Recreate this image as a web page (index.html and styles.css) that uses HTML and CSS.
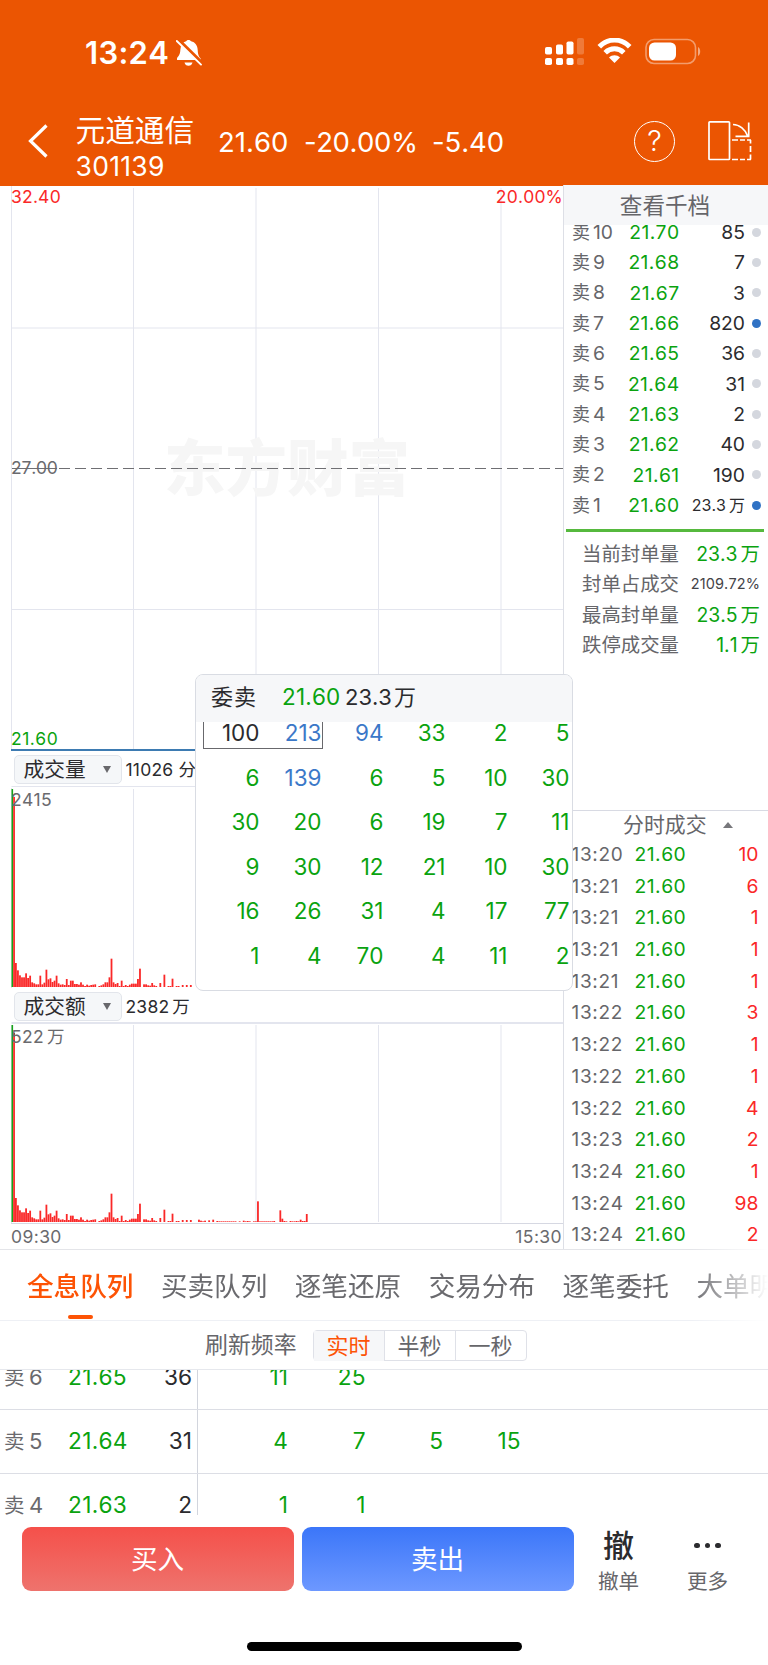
FILE: index.html
```html
<!DOCTYPE html>
<html lang="zh-CN">
<head>
<meta charset="utf-8">
<title>元道通信 301139</title>
<link rel="stylesheet" href="styles.css">
</head>
<body>
<header class="header">
  <div class="status">
    <span class="clock">13:24</span>
    <svg class="bell" width="26" height="28" viewBox="0 0 26 28">
      <path fill="#fff" d="M12.5 1c.9 0 1.900.5 2.600 1.200 4 1 6.400 4 6.600 8.800.2 4.500 1.100 6.200 2.600 8.100.4.600.7 1.300.7 1.900H1c-.3-2.300.7-2.800 1.600-4 1-1.500 1.600-3 1.800-6.500.3-4.400 2.300-7.300 5.700-8.300C10.700 1.500 11.600 1 12.500 1zM8.500 23.500h8c-.4 2-2 3.300-4 3.300s-3.600-1.300-4-3.300z"/>
      <path d="M1.200 0L26 24.200" stroke="#eb5502" stroke-width="4"/>
      <path d="M.8 2L25 25.600" stroke="#fff" stroke-width="1.900" stroke-linecap="round"/>
    </svg>
    <svg class="signal" width="40" height="28" viewBox="0 0 40 28" fill="#fff">
      <rect x="1" y="9" width="7" height="7.500" rx="1.800"/><rect x="12" y="6.500" width="7" height="10" rx="1.800"/><rect x="22.500" y="3.500" width="7" height="13" rx="1.800"/><rect x="33" y="0" width="7" height="16.500" rx="1.800" opacity=".22"/>
      <rect x="1" y="20" width="7" height="7" rx="1.800"/><rect x="12" y="20" width="7" height="7" rx="1.800"/><rect x="22.500" y="20" width="7" height="7" rx="1.800"/><rect x="33" y="20" width="7" height="7" rx="1.800" opacity=".22"/>
    </svg>
    <svg class="wifi" width="35" height="26" viewBox="0 0 35 26" fill="none" stroke="#fff" stroke-width="5">
      <path d="M2.300 8.800C11-0.200 24-0.200 32.700 8.800"/><path d="M8.200 14.700C13.500 9.500 21.500 9.500 26.800 14.700"/><path stroke="none" fill="#fff" d="M12 19.500c3-3 8-3 11 0L17.500 25z"/>
    </svg>
    <svg class="battery" width="56" height="27" viewBox="0 0 56 27">
      <rect x="1" y="1.500" width="49.500" height="24" rx="8" fill="none" stroke="#fff" stroke-opacity=".42" stroke-width="1.600"/>
      <rect x="4" y="4.500" width="27" height="18" rx="5.500" fill="#fff"/><path d="M53 9c2.900 1.200 2.900 7.800 0 9z" fill="#fff" opacity=".5"/>
    </svg>
  </div>
  <div class="title">
    <svg class="back" width="22" height="36" viewBox="0 0 22 36"><path d="M19.500 2.500L3.500 18l16 15.500" fill="none" stroke="#fff" stroke-width="3.200"/></svg>
    <div class="stock"><span class="name">元道通信</span><span class="code">301139</span></div>
    <span class="quote q1">21.60</span><span class="quote q2">-20.00%</span><span class="quote q3">-5.40</span>
    <div class="help">?</div>
    <svg class="rotate" width="46" height="42" viewBox="0 0 46 42" fill="none" stroke="#fff" stroke-width="1.700">
      <rect x="1" y="1.800" width="20.500" height="37.700" rx=".8"/>
      <path d="M25 4.500c6.500 0 12.500 5 14.600 11.500M40.700 2.500v13.700M27.500 16.400h14"/>
      <path d="M24 20h6M32 20h5M39 20h4M42.500 20v3.500M42.500 26v6M42.500 34.500v5M24 39.500h6M32 39.500h5M39 39.500h4"/>
    </svg>
  </div>
</header>

<main class="main">
  <section class="charts">
    <div class="panel price">
      <svg class="plot" width="564" height="566">
        <g class="grid"><path d="M11.500 0V566M133.500 3V564M256 3V564M378.500 3V564M501 3V564M12 143H563M12 424.500H563"/></g>
        <text class="mark" x="287" y="306" text-anchor="middle">东方财富</text>
        <path class="mid" d="M12 283.500H57"/><path class="mid dash" d="M59 283.500H563"/>
        <path class="flat" d="M11 565H564"/>
      </svg>
      <div class="ends red"><span>32.40</span><span>20.00%</span></div>
      <div class="center-price">27.00</div>
      <div class="ends green"><span>21.60</span></div>
    </div>
    <div class="tool"><div class="select">成交量<i></i></div><span>11026 分时</span></div>
    <div class="panel volume">
      <svg class="plot" width="564" height="203">
        <g class="grid"><path d="M11.500 1.500H564M11.500 3V203M133.500 4V202M256 4V202M378.500 4V202M501 4V202"/></g>
        <g class="bars" data-base="202" data-top="4"></g>
      </svg>
      <span class="peak">2415</span>
    </div>
    <div class="tool"><div class="select">成交额<i></i></div><span>2382<u>万</u></span></div>
    <div class="panel amount">
      <svg class="plot" width="564" height="202">
        <g class="grid"><path d="M11.500 1H564" class="thick"/><path d="M11.500 3V202M133.500 3V200M256 3V200M378.500 3V200M501 3V200"/></g>
        <path class="axisline" d="M11 201.500H564"/>
        <g class="bars" data-base="200" data-top="3"></g>
      </svg>
      <span class="peak">522<u>万</u></span>
    </div>
    <div class="ends axis"><span>09:30</span><span>15:30</span></div>
  </section>

  <aside class="book">
    <div class="book-head">查看千档</div>
    <div class="asks">
      <div><b>卖<s>10</s></b><em>21.70</em><span>85</span><i></i></div>
      <div><b>卖<s>9</s></b><em>21.68</em><span>7</span><i></i></div>
      <div><b>卖<s>8</s></b><em>21.67</em><span>3</span><i></i></div>
      <div><b>卖<s>7</s></b><em>21.66</em><span>820</span><i class="on"></i></div>
      <div><b>卖<s>6</s></b><em>21.65</em><span>36</span><i></i></div>
      <div><b>卖<s>5</s></b><em>21.64</em><span>31</span><i></i></div>
      <div><b>卖<s>4</s></b><em>21.63</em><span>2</span><i></i></div>
      <div><b>卖<s>3</s></b><em>21.62</em><span>40</span><i></i></div>
      <div><b>卖<s>2</s></b><em>21.61</em><span>190</span><i></i></div>
      <div><b>卖<s>1</s></b><em>21.60</em><span class="small">23.3<u>万</u></span><i class="on"></i></div>
    </div>
    <div class="divider"></div>
    <div class="info">
      <div>当前封单量<span>23.3<u>万</u></span></div>
      <div>封单占成交<span class="pct">2109.72%</span></div>
      <div>最高封单量<span>23.5<u>万</u></span></div>
      <div>跌停成交量<span>1.1<u>万</u></span></div>
    </div>
    <div class="ticks">
      <div class="ticks-head">分时成交<i></i></div>
      <div class="tick"><b>13:20</b><em>21.60</em><span>10</span></div>
      <div class="tick"><b>13:21</b><em>21.60</em><span>6</span></div>
      <div class="tick"><b>13:21</b><em>21.60</em><span>1</span></div>
      <div class="tick"><b>13:21</b><em>21.60</em><span>1</span></div>
      <div class="tick"><b>13:21</b><em>21.60</em><span>1</span></div>
      <div class="tick"><b>13:22</b><em>21.60</em><span>3</span></div>
      <div class="tick"><b>13:22</b><em>21.60</em><span>1</span></div>
      <div class="tick"><b>13:22</b><em>21.60</em><span>1</span></div>
      <div class="tick"><b>13:22</b><em>21.60</em><span>4</span></div>
      <div class="tick"><b>13:23</b><em>21.60</em><span>2</span></div>
      <div class="tick"><b>13:24</b><em>21.60</em><span>1</span></div>
      <div class="tick"><b>13:24</b><em>21.60</em><span>98</span></div>
      <div class="tick"><b>13:24</b><em>21.60</em><span>2</span></div>
    </div>
  </aside>

  <div class="popup">
    <div class="popup-head"><b>委卖</b><em>21.60</em><span>23.3<u>万</u></span></div>
    <div class="queue">
      <span class="own"></span>
      <span class="dark">100</span><span class="blue">213</span><span class="blue">94</span><span>33</span><span>2</span><span>5</span>
      <span>6</span><span class="blue">139</span><span>6</span><span>5</span><span>10</span><span>30</span>
      <span>30</span><span>20</span><span>6</span><span>19</span><span>7</span><span>11</span>
      <span>9</span><span>30</span><span>12</span><span>21</span><span>10</span><span>30</span>
      <span>16</span><span>26</span><span>31</span><span>4</span><span>17</span><span>77</span>
      <span>1</span><span>4</span><span>70</span><span>4</span><span>11</span><span>2</span>
    </div>
  </div>
</main>

<nav class="tabs">
  <span class="active">全息队列</span><span>买卖队列</span><span>逐笔还原</span><span>交易分布</span><span>逐笔委托</span><span>大单明细</span>
</nav>
<div class="freq">
  <span class="freq-label">刷新频率</span>
  <div class="segment"><span class="sel">实时</span><span>半秒</span><span>一秒</span></div>
</div>
<div class="levels">
  <div class="level"><div class="side"><b>卖<s>6</s></b><em>21.65</em><span>36</span></div><i>11</i><i>25</i></div>
  <div class="level"><div class="side"><b>卖<s>5</s></b><em>21.64</em><span>31</span></div><i>4</i><i>7</i><i>5</i><i>15</i></div>
  <div class="level"><div class="side"><b>卖<s>4</s></b><em>21.63</em><span>2</span></div><i>1</i><i>1</i></div>
</div>
<footer class="actions">
  <div class="btn buy">买入</div><div class="btn sell">卖出</div>
  <div class="act"><span class="glyph">撤</span><span>撤单</span></div>
  <div class="act more"><span class="glyph"><i></i><i></i><i></i></span><span>更多</span></div>
</footer>
<div class="home"></div>
<script src="bars.js"></script>
</body>
</html>
```
FILE: bars.js
```js
// Per-minute turnover, as bar heights in thirds of a pixel, starting at 09:32.
const heights = [72,50,35,29,29,41,27,34,14,11,8,8,34,8,13,52,23,26,15,19,34,11,7,8,6,24,6,19,19,9,9,7,14,7,3,7,4,6,7,8,0,3,5,8,14,14,29,85,14,9,12,3,19,3,6,3,7,10,10,10,24,55,0,8,8,5,4,12,5,3,0,12,0,37,0,3,3,25,0,3,3,0,6,0,6,0,6,0,0,0,7,4,2,4,0,5,0,7,0,3,2,2,2,2,2,2,2,2,2,0,2,0,4,2,3,2,0,2,2,62,2,2,2,2,2,2,2,3,0,0,35,10,3,2,0,3,2,2,3,2,7,3,3,24];
const STEP = 2.034;
document.querySelectorAll('.bars').forEach(g => {
  const base = Number(g.dataset.base), top = Number(g.dataset.top);
  const bar = (x, y, w, color) => {
    const r = document.createElementNS('http://www.w3.org/2000/svg', 'rect');
    r.setAttribute('x', x.toFixed(2));
    r.setAttribute('y', y);
    r.setAttribute('width', w);
    r.setAttribute('height', base - y);
    r.setAttribute('fill', color);
    g.appendChild(r);
  };
  bar(11.5, top, 1.6, '#17a31a');
  bar(13.1, top + 8, 1.9, '#fa3434');
  heights.forEach((h, i) => {
    if (h) bar(15 + i * STEP, base - h / 3, 1.8, '#fa2828');
  });
});
```
FILE: styles.css
```css
* { box-sizing: border-box; }
body { margin: 0; width: 768px; height: 1665px; overflow: hidden; background: #fff; color: #2b2b2e; font-family: Inter, "Noto Sans CJK SC", sans-serif; font-kerning: none; }
b, em, i, s, u { font-weight: 400; font-style: normal; text-decoration: none; }
span, b, em { white-space: nowrap; }
svg { display: block; flex: none; }
em, .green { color: #0aa30f; }
.red { color: #fa2828; }

.header { height: 185.500px; background: #eb5502; color: #fff; }
.status { height: 102px; display: flex; align-items: flex-start; padding-left: 85px; }
.clock { width: 91px; margin-top: 33px; line-height: 40px; font-size: 31px; font-weight: 600; letter-spacing: .3px; }
.bell { margin-top: 39px; }
.signal { margin: 38px 0 0 342px; }
.wifi { margin: 38px 0 0 13px; }
.battery { margin: 38px 0 0 12.500px; }
.title { height: 83px; display: flex; padding-left: 27px; }
.back { margin-top: 21px; }
.stock { width: 169px; padding-left: 26.500px; display: flex; flex-direction: column; }
.name { font-size: 29.700px; line-height: 36px; margin-top: 10px; }
.code { font-size: 26.500px; line-height: 32px; margin-top: 2px; letter-spacing: .3px; }
.quote { margin-top: 20px; font-size: 27.500px; line-height: 40px; }
.q1 { width: 86px; }
.q2 { width: 128px; letter-spacing: -.4px; }
.q3 { width: 202px; letter-spacing: -.1px; }
.help { width: 41px; height: 41px; margin-top: 19px; border: 1.500px solid #fff; border-radius: 50%; font-size: 29px; font-weight: 300; line-height: 38px; text-align: center; flex: none; }
.rotate { margin: 18px 0 0 33px; }

.main { position: relative; display: flex; height: 1064px; margin-top: -.5px; }
.charts { width: 564px; border-right: 1px solid #dddfe6; flex: none; font-size: 17.500px; }
.panel { position: relative; width: 564px; display: flex; flex-direction: column; }
.plot { position: absolute; left: 0; top: 0; z-index: -1; }
.grid path { stroke: #e3e5ee; stroke-width: 1; fill: none; }
.grid .thick { stroke-width: 2; }
.mark { font: 900 61.500px "Noto Sans CJK SC"; fill: #f6f6f6; }
.mid { stroke: #6f6f73; stroke-width: 1; }
.dash { stroke-dasharray: 11 5; }
.flat { stroke: #3d7bb2; stroke-width: 2; }
.axisline { stroke: #d6d8e2; stroke-width: 1; }
.price { height: 566px; justify-content: space-between; }
.ends { display: flex; justify-content: space-between; padding: 0 1px 0 11px; line-height: 24px; letter-spacing: .2px; }
.ends.green { letter-spacing: .5px; }
.center-price { padding-left: 11px; line-height: 24px; color: #6a6a6e; letter-spacing: -.2px; }
.tool { height: 34px; padding: 4px 0 0 14px; display: flex; line-height: 29px; }
.tool span { padding-left: 3.500px; letter-spacing: .2px; }
.select { width: 108px; height: 29px; padding: 0 10px 0 8.500px; border: 1px solid #e2e5eb; border-radius: 5px; background: #f5f7f9; display: flex; align-items: center; justify-content: space-between; font-size: 20.700px; line-height: 27px; }
.select i { border: 4px solid transparent; border-top: 7px solid #68686c; border-bottom: 0; }
.volume { height: 203px; }
.amount { height: 202px; }
.peak { padding: 3px 0 0 11px; line-height: 24px; color: #6a6a6e; letter-spacing: .3px; }
.axis { color: #6a6a6e; line-height: 26px; letter-spacing: .4px; }

.book { width: 204px; color: #66666a; flex: none; }
.book-head { height: 39.500px; background: #f6f7f9; text-align: center; font-size: 22.600px; line-height: 42px; padding-right: 2px; }
.asks { height: 297px; overflow: hidden; margin-bottom: 7.500px; }
.asks div { height: 30.330px; line-height: 30px; display: flex; align-items: center; padding: 0 7px 0 8px; font-size: 19.300px; }
.asks div:first-child { margin-top: -7.500px; }
.asks b { width: 49px; font-size: 18px; }
.asks s { font-size: 19.300px; margin-left: 3px; }
.asks em { width: 58.500px; text-align: right; letter-spacing: .4px; }
.asks span { flex: 1; text-align: right; color: #2b2b2e; }
.asks .small { font-size: 16px; }
.asks i { width: 9px; height: 9px; border-radius: 50%; background: #d4d7de; margin-left: 7px; }
.asks .on { background: #3072c4; }
u { margin-left: 3px; }
.divider { height: 3px; margin: 0 4px 0 2px; background: #56b93e; }
.info { height: 278px; padding: 7px 8px 0 18px; }
.info div { display: flex; justify-content: space-between; height: 30.300px; line-height: 30px; font-size: 19.400px; }
.info span { color: #0aa30f; }
.info .pct { color: #444448; font-size: 14.500px; letter-spacing: .1px; }
.ticks { border-top: 1px solid #d8dae3; }
.ticks-head { height: 28px; display: flex; align-items: center; gap: 16px; font-size: 20.900px; line-height: 28px; padding-left: 59px; }
.ticks-head i { border: 5px solid transparent; border-bottom: 6px solid #77777b; border-top: 0; }
.tick { height: 31.700px; line-height: 31px; display: flex; padding: 0 9.500px 0 7.500px; font-size: 19px; }
.tick b { width: 63px; letter-spacing: .7px; }
.tick em { width: 60px; font-size: 19.300px; letter-spacing: .5px; }
.tick span { flex: 1; text-align: right; color: #fa2828; font-size: 19.300px; }

.popup { position: absolute; left: 195px; top: 489px; width: 378px; height: 317px; border: 1px solid #d9dce3; border-radius: 8px; background: #fff; overflow: hidden; font-size: 22.500px; }
.popup-head { height: 47px; background: #f6f7f9; display: flex; padding-left: 15px; line-height: 44px; }
.popup-head b { font-size: 22px; width: 71px; letter-spacing: 1px; }
.popup-head em { width: 63px; letter-spacing: .2px; }
.popup-head span { font-size: 22px; }
.popup-head u { margin-left: 2px; }
.queue { position: relative; display: grid; grid-template-columns: 63.500px repeat(5, 62px); grid-auto-rows: 44.600px; line-height: 45px; color: #0aa30f; text-align: right; margin-top: -12px; clip-path: inset(12px 0 0 0); }
.queue .own { position: absolute; left: 7px; top: 0; width: 120px; height: 39px; border: 1px solid #68686c; }
.queue .dark { color: #2b2b2e; }
.queue .blue { color: #3b78c8; }

.tabs { height: 72px; border-top: 1px solid #e4e5e9; border-bottom: 1px solid #eef0f5; display: flex; gap: 27.500px; padding-left: 27px; font-size: 26.600px; line-height: 73px; color: #6a6a6e; overflow: hidden; -webkit-mask-image: linear-gradient(90deg, #000 90%, transparent 100%); }
.tabs .active { position: relative; color: #fd5305; font-weight: 500; }
.tabs .active::after { content: ""; position: absolute; left: 41px; bottom: 1px; width: 25px; height: 4px; border-radius: 2px; background: #fd5305; }
.freq { height: 49px; border-bottom: 1px solid #e6e8ed; display: flex; align-items: center; padding-left: 205px; color: #66666a; }
.freq-label { width: 108px; font-size: 22.900px; line-height: 30px; }
.segment { width: 214px; height: 31px; display: grid; grid-template-columns: 70px 71px 71px; border: 1px solid #dfe1e8; border-radius: 4px; font-size: 22px; line-height: 30px; text-align: center; }
.segment span { padding-right: 1px; }
.segment span + span { border-left: 1px solid #dfe1e8; }
.segment .sel { background: #f6f7f9; color: #fd5305; }
.levels { height: 145px; overflow: hidden; font-size: 22.700px; }
.level { height: 64.300px; display: flex; border-bottom: 1px solid #dcdee5; line-height: 62px; }
.level:first-child { margin-top: -24.500px; }
.side { width: 198px; display: flex; border-right: 1px solid #d2d5dd; padding: 0 5px 0 4px; flex: none; }
.side b { width: 64px; color: #6a6a6e; font-size: 20.500px; }
.side s { font-size: 22px; margin-left: 4.500px; }
.side em { letter-spacing: .3px; }
.side span { flex: 1; text-align: right; }
.level i { width: 77.500px; text-align: right; color: #0aa30f; }
.level .side + i { width: 90px; }

.actions { height: 77px; padding: 12px 0 0 21.500px; display: flex; background: #fff; }
.btn { width: 272px; height: 64px; margin-right: 8px; border-radius: 9px; color: #fff; font-size: 26.600px; line-height: 65px; text-align: center; }
.buy { background: linear-gradient(#f5504a, #ee736d); }
.sell { background: linear-gradient(#3b76f9, #6d98ff); }
.act { width: 74px; display: flex; flex-direction: column; align-items: center; font-size: 20.600px; line-height: 28px; color: #66666a; }
.more { margin-left: 15px; }
.glyph { height: 41px; flex: none; font-size: 31px; line-height: 36px; color: #2b2b2e; font-weight: 500; display: flex; gap: 5px; align-items: center; padding-bottom: 4px; }
.glyph i { width: 5.500px; height: 5.500px; border-radius: 50%; background: #2b2b2e; }
.home { width: 275px; height: 9px; margin: 49.500px 0 0 246.500px; border-radius: 5px; background: #000; }
```
